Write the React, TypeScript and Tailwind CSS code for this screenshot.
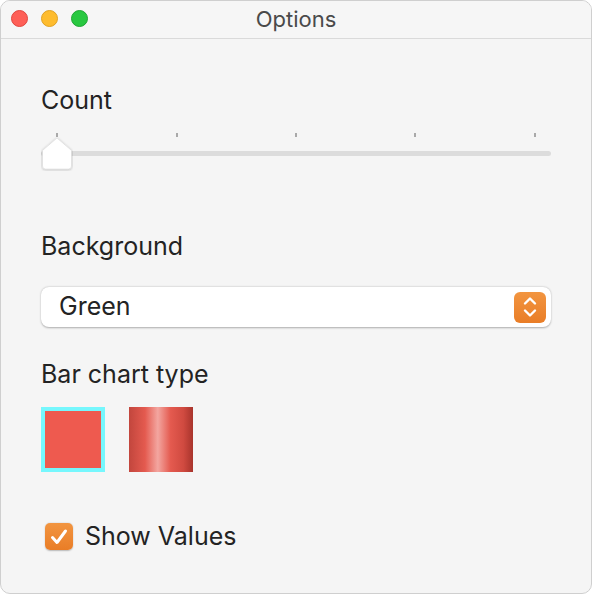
import { useState } from 'react'

const ticks = [16, 136, 255, 374, 494]

function Slider() {
  return (
    <div className="relative h-[40px] w-full">
      {/* tick marks */}
      {ticks.map(x => (
        <div key={x} className="absolute top-[1px] h-[4px] w-[2px] bg-[#a9a9a9]" style={{ left: x - 1 }} />
      ))}
      {/* track */}
      <div className="absolute left-0 right-0 top-[19px] h-[5px] rounded-full bg-[#dcdcdc]" />
      {/* thumb */}
      <svg className="absolute left-0 top-[5px]" width="32" height="34" viewBox="0 0 32 34">
        <defs>
          <filter id="ts" x="-30%" y="-30%" width="160%" height="160%">
            <feDropShadow dx="0" dy="0.5" stdDeviation="0.8" floodColor="#000" floodOpacity="0.3" />
          </filter>
        </defs>
        <path
          d="M16 1 L30.5 13.5 L30.5 29 Q30.5 32 27.5 32 L4.5 32 Q1.5 32 1.5 29 L1.5 13.5 Z"
          fill="#ffffff"
          stroke="#d4d4d4"
          strokeWidth="0.5"
          filter="url(#ts)"
        />
      </svg>
    </div>
  )
}

function Popup() {
  return (
    <div className="flex h-[40px] w-full items-center justify-between rounded-[8px] bg-white pl-[18px] pr-[5px] shadow-[0_0.5px_2px_rgba(0,0,0,0.3)]">
      <span className="text-[25px] text-[#232323]">Green</span>
      <div className="flex h-[31px] w-[32px] items-center justify-center rounded-[6px] bg-gradient-to-b from-[#f29540] to-[#e97d26]">
        <svg width="16" height="24" viewBox="0 0 16 24" fill="none" stroke="white" strokeWidth="2.4" strokeLinecap="round" strokeLinejoin="round">
          <path d="M3 8.5 L8 3.5 L13 8.5" />
          <path d="M3 15.5 L8 20.5 L13 15.5" />
        </svg>
      </div>
    </div>
  )
}

export default function App() {
  const [checked] = useState(true)

  return (
    <div className="h-[594px] w-[592px] bg-white" style={{ fontFamily: 'Inter, "Noto Sans", sans-serif' }}>
      <div className="flex h-full w-full flex-col overflow-hidden rounded-[10px] border border-[#cfcfcf] bg-[#f5f5f5]">
        {/* Title bar */}
        <div className="relative flex h-[38px] shrink-0 items-center justify-center border-b border-[#dadada] bg-[#f6f6f6]">
          <div className="absolute left-[10px] top-[9px] flex gap-[13px]">
            <div className="h-[17px] w-[17px] rounded-full border border-[#e0463f] bg-[#fe5f57]" />
            <div className="h-[17px] w-[17px] rounded-full border border-[#dfa123] bg-[#febc2e]" />
            <div className="h-[17px] w-[17px] rounded-full border border-[#20a534] bg-[#28c840]" />
          </div>
          <span className="text-[22px] text-[#4a4a4a]">Options</span>
        </div>

        {/* Content */}
        <div className="flex flex-col px-[40px]">
          <div className="mt-[47px] h-[28px] text-[25px] leading-[28px] text-[#232323]">Count</div>
          <div className="mt-[18px]">
            <Slider />
          </div>

          <div className="mt-[60px] h-[28px] text-[25px] leading-[28px] text-[#232323]">Background</div>
          <div className="mt-[27px]">
            <Popup />
          </div>

          <div className="mt-[33px] h-[28px] text-[25px] leading-[28px] text-[#232323]">Bar chart type</div>
          <div className="mt-[19px] flex gap-[24px]">
            <div className="h-[65px] w-[64px] border-[4px] border-[#76f7fd] bg-[#ee5a4f]" />
            <div className="h-[65px] w-[64px] bg-[linear-gradient(to_right,#c2463d_0%,#e45a4f_25%,#f3a6a0_45%,#e45a4f_65%,#d04a40_85%,#a8342c_100%)]" />
          </div>

          <div className="ml-[4px] mt-[46px] flex items-center gap-[12px]">
            <div className="flex h-[27px] w-[28px] items-center justify-center rounded-[5px] bg-gradient-to-b from-[#f29540] to-[#e97d26] shadow-[0_0.5px_1.5px_rgba(0,0,0,0.25)]">
              {checked && (
                <svg width="20" height="18" viewBox="0 0 20 18" fill="none" stroke="white" strokeWidth="3" strokeLinecap="round" strokeLinejoin="round">
                  <path d="M3.5 9.5 L8 14.5 L16.5 3" />
                </svg>
              )}
            </div>
            <span className="text-[25px] text-[#232323]">Show Values</span>
          </div>
        </div>
      </div>
    </div>
  )
}
